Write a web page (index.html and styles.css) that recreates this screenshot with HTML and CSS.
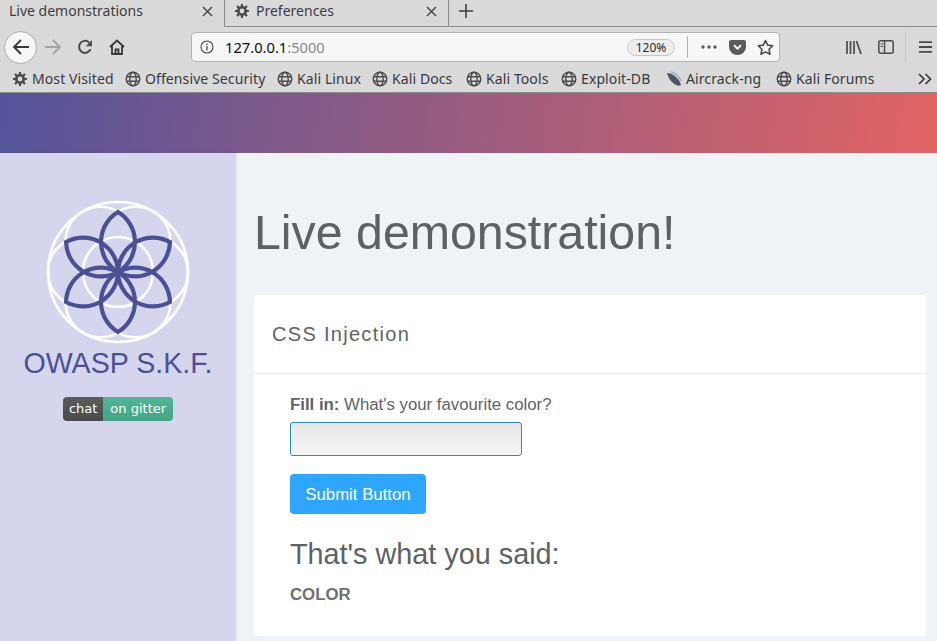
FILE: index.html
```html
<!DOCTYPE html>
<html lang="en">
<head>
  <meta charset="UTF-8">
  <title>Live demonstrations</title>
  <link rel="stylesheet" href="styles.css">
</head>
<body>
  <svg class="defs" width="0" height="0">
    <symbol id="globe" viewBox="0 0 16 16">
      <g fill="none" stroke="#4a4a4f" stroke-width="1.4">
        <circle cx="8" cy="8" r="6.8"/>
        <ellipse cx="8" cy="8" rx="3.2" ry="6.8"/>
        <path d="M1.4 5.7h13.2M1.4 10.3h13.2"/>
      </g>
    </symbol>
    <symbol id="gear" viewBox="0 0 16 16">
      <circle cx="8" cy="8" r="3.9" fill="none" stroke="#4a4a4f" stroke-width="2.4"/>
      <path d="M8 1v14M1 8h14M3 3l10 10M13 3L3 13" stroke="#4a4a4f" stroke-width="2.2"/>
      <circle cx="8" cy="8" r="2.4" fill="#dadada"/>
    </symbol>
    <symbol id="close" viewBox="0 0 11 11">
      <path d="M1 1l9 9M10 1l-9 9" stroke="#4a4a4f" stroke-width="1.5"/>
    </symbol>
  </svg>

  <div class="tabbar">
    <div class="tab tab-active">
      <span class="tab-title">Live demonstrations</span>
      <svg width="11" height="11"><use href="#close"/></svg>
    </div>
    <div class="tab">
      <svg class="tab-icon" width="16" height="16"><use href="#gear"/></svg>
      <span class="tab-title">Preferences</span>
      <svg width="11" height="11"><use href="#close"/></svg>
    </div>
    <div class="tab-new">
      <svg width="16" height="16" viewBox="0 0 16 16"><path d="M8 1v14M1 8h14" stroke="#3c3c3f" stroke-width="1.6"/></svg>
    </div>
  </div>

  <div class="toolbar">
    <div class="back-btn">
      <svg width="18" height="18" viewBox="0 0 18 18"><path d="M17 9H2M9 2L2 9l7 7" fill="none" stroke="#38383d" stroke-width="1.9"/></svg>
    </div>
    <svg class="tool-icon forward" width="18" height="18" viewBox="0 0 18 18"><path d="M1 9h15M9 2l7 7-7 7" fill="none" stroke="#a3a3a3" stroke-width="1.9"/></svg>
    <svg class="tool-icon reload" width="16" height="16" viewBox="0 0 16 16"><path d="M13.6 10.2A6 6 0 1 1 12.3 3.6" fill="none" stroke="#4a4a4f" stroke-width="2"/><path d="M15 1v6.2H8.8z" fill="#4a4a4f"/></svg>
    <svg class="tool-icon home" width="16" height="16" viewBox="0 0 16 16"><path d="M1 8l7-6.5L15 8M3 6.5V15h10V6.5M6.5 15v-4.5h3V15" fill="none" stroke="#38383d" stroke-width="1.8"/></svg>

    <div class="urlbar">
      <svg class="info-icon" width="14" height="14" viewBox="0 0 14 14"><circle cx="7" cy="7" r="6" fill="none" stroke="#4a4a4f" stroke-width="1.1"/><path d="M7 6v4.4M7 3.4v1.5" stroke="#4a4a4f" stroke-width="1.3"/></svg>
      <span class="url">127.0.0.1<span class="url-port">:5000</span></span>
      <span class="zoom-pill">120%</span>
      <span class="url-sep"></span>
      <svg class="url-icon" width="18" height="4" viewBox="0 0 18 4"><circle cx="3" cy="2" r="1.7" fill="#5a5a5f"/><circle cx="9" cy="2" r="1.7" fill="#5a5a5f"/><circle cx="15" cy="2" r="1.7" fill="#5a5a5f"/></svg>
      <svg class="url-icon" width="17" height="15" viewBox="0 0 17 15"><path d="M2 0h13a2 2 0 0 1 2 2v5a8.5 8 0 0 1-17 0V2a2 2 0 0 1 2-2z" fill="#5a5a5f"/><path d="M5 5.2l3.5 3.4L12 5.2" fill="none" stroke="#f7f7f7" stroke-width="2"/></svg>
      <svg class="url-icon" width="17" height="17" viewBox="0 0 17 17"><path d="M8.5 1.5l2.2 4.6 5 .7-3.6 3.5.9 5-4.5-2.4L4 15.3l.9-5L1.3 6.8l5-.7z" fill="none" stroke="#4a4a4f" stroke-width="1.6" stroke-linejoin="round"/></svg>
    </div>

    <div class="tool-right">
      <svg width="16" height="15" viewBox="0 0 16 15"><path d="M1 1v13M4.5 1v13M8 1v13M10.5 1l4.5 13" fill="none" stroke="#4a4a4f" stroke-width="1.7"/></svg>
      <svg class="sidebar-icon" width="16" height="14" viewBox="0 0 16 14"><rect x="0.8" y="0.8" width="14.4" height="12.4" rx="2" fill="none" stroke="#4a4a4f" stroke-width="1.5"/><path d="M6.5 1v12" stroke="#4a4a4f" stroke-width="1.5"/><path d="M2.5 4h2.5M2.5 6.5h2.5" stroke="#4a4a4f" stroke-width="1"/></svg>
      <span class="tool-sep"></span>
      <svg width="13" height="12" viewBox="0 0 13 12"><path d="M0 1.2h13M0 6h13M0 10.8h13" stroke="#4a4a4f" stroke-width="1.8"/></svg>
    </div>
  </div>

  <div class="bookmarks">
    <span class="bookmark"><svg width="16" height="16"><use href="#gear"/></svg>Most Visited</span>
    <span class="bookmark"><svg width="16" height="16"><use href="#globe"/></svg>Offensive Security</span>
    <span class="bookmark"><svg width="16" height="16"><use href="#globe"/></svg>Kali Linux</span>
    <span class="bookmark"><svg width="16" height="16"><use href="#globe"/></svg>Kali Docs</span>
    <span class="bookmark"><svg width="16" height="16"><use href="#globe"/></svg>Kali Tools</span>
    <span class="bookmark"><svg width="16" height="16"><use href="#globe"/></svg>Exploit-DB</span>
    <span class="bookmark"><svg width="16" height="16" viewBox="0 0 16 16"><path d="M1 2c6 0 12 5 14 12-1 1-3 1-5 0C6 12 2 7 1 2z" fill="#4f5660"/><path d="M5 1c4 1 8 4 10 9" fill="none" stroke="#8fb0dc" stroke-width="1.5"/></svg>Aircrack-ng</span>
    <span class="bookmark"><svg width="16" height="16"><use href="#globe"/></svg>Kali Forums</span>
    <svg class="more" width="14" height="12" viewBox="0 0 14 12"><path d="M1 1l5 5-5 5M7.5 1l5 5-5 5" fill="none" stroke="#38383d" stroke-width="1.7"/></svg>
  </div>

  <div class="banner"></div>

  <div class="layout">
    <aside class="sidebar">
      <svg class="logo" width="150" height="150" viewBox="-75 -75 150 150">
        <g fill="none" stroke="#fff" stroke-width="2.6">
          <circle r="70"/>
          <circle r="35"/>
          <circle cx="35" cy="0" r="35"/>
          <circle cx="17.5" cy="-30.3" r="35"/>
          <circle cx="-17.5" cy="-30.3" r="35"/>
          <circle cx="-35" cy="0" r="35"/>
          <circle cx="-17.5" cy="30.3" r="35"/>
          <circle cx="17.5" cy="30.3" r="35"/>
        </g>
        <g fill="none" stroke="#4b5094" stroke-width="4.2">
          <path d="M0 0A35 35 0 0 1 0-60A35 35 0 0 1 0 0z"/>
          <path d="M0 0A35 35 0 0 1 0-60A35 35 0 0 1 0 0z" transform="rotate(60)"/>
          <path d="M0 0A35 35 0 0 1 0-60A35 35 0 0 1 0 0z" transform="rotate(120)"/>
          <path d="M0 0A35 35 0 0 1 0-60A35 35 0 0 1 0 0z" transform="rotate(180)"/>
          <path d="M0 0A35 35 0 0 1 0-60A35 35 0 0 1 0 0z" transform="rotate(240)"/>
          <path d="M0 0A35 35 0 0 1 0-60A35 35 0 0 1 0 0z" transform="rotate(300)"/>
        </g>
      </svg>
      <div class="brand">OWASP S.K.F.</div>
      <div class="badge"><span class="badge-left">chat</span><span class="badge-right">on gitter</span></div>
    </aside>

    <main class="content">
      <h1 class="title">Live demonstration!</h1>
      <section class="card">
        <header class="card-head">CSS Injection</header>
        <div class="card-body">
          <label class="field-label" for="color"><b>Fill in:</b> What's your favourite color?</label>
          <input class="field" id="color" type="text">
          <button class="submit" type="button">Submit Button</button>
          <h2 class="said">That's what you said:</h2>
          <p class="answer">COLOR</p>
        </div>
      </section>
    </main>
  </div>
</body>
</html>
```

FILE: styles.css
```css
html, body {
  height: 100%;
}

body {
  margin: 0;
  display: flex;
  flex-direction: column;
  overflow: hidden;
  font-family: "Liberation Sans", Arial, sans-serif;
  background-color: #eff3f6;
}

.defs {
  position: absolute;
}

/* browser chrome */
.tabbar {
  height: 27px;
  flex: none;
  display: flex;
  box-sizing: border-box;
  border-bottom: 1px solid #8c8c8c;
  background-color: #dadada;
  font-family: "Noto Sans", sans-serif;
  font-size: 14px;
  color: #3c3c3f;
}

.tab {
  width: 224px;
  display: flex;
  align-items: center;
  box-sizing: border-box;
  padding: 0 11px 4px 9px;
  border-right: 1px solid #8c8c8c;
}

/* sits over the strip's bottom line */
.tab-active {
  width: 225px;
  margin-bottom: -1px;
  padding-bottom: 5px;
  background-color: #dadada;
}

.tab-icon {
  margin-right: 6px;
}

.tab-title {
  flex: 1;
  margin-top: -1px;
}

.tab-new {
  width: 34px;
  display: flex;
  align-items: center;
  justify-content: center;
  padding-bottom: 4px;
}

.toolbar {
  height: 38px;
  padding-top: 1px;
  flex: none;
  display: flex;
  align-items: center;
  background-color: #dadada;
}

.back-btn {
  width: 33px;
  height: 33px;
  margin-left: 4px;
  display: flex;
  align-items: center;
  justify-content: center;
  box-sizing: border-box;
  border: 1px solid #ababab;
  border-radius: 50%;
  background-color: #f7f7f7;
}

.tool-icon {
  flex: none;
}

.forward {
  margin-left: 7px;
}

.reload {
  margin-left: 15px;
}

.home {
  margin-left: 16px;
}

.urlbar {
  width: 589px;
  height: 30px;
  margin-left: 66px;
  display: flex;
  align-items: center;
  box-sizing: border-box;
  padding: 0 5px 0 8px;
  border: 1px solid #b4b4b4;
  border-radius: 4px;
  background-color: #f7f7f7;
  font-family: "Noto Sans", sans-serif;
}

.url {
  flex: 1;
  margin-left: 11px;
  font-size: 14.7px;
  color: #0c0c0d;
}

.url-port {
  color: #8a8a8a;
}

.zoom-pill {
  width: 46px;
  height: 15px;
  line-height: 15px;
  text-align: center;
  border: 1px solid #c8c8c8;
  border-radius: 9px;
  background-color: #ededed;
  font-size: 12px;
  color: #2a2a2e;
}

.url-sep {
  width: 1px;
  height: 22px;
  margin: 0 12px;
  background-color: #b4b4b4;
}

.url-icon {
  margin-right: 11px;
}

.url-icon:last-child {
  margin-right: 0;
}

.tool-right {
  display: flex;
  align-items: center;
  margin-left: 66px;
}

.sidebar-icon {
  margin-left: 16px;
}

.tool-sep {
  width: 1px;
  height: 32px;
  margin: 0 13px 0 11px;
  background-color: #c4c4c4;
}

.bookmarks {
  height: 27px;
  flex: none;
  display: grid;
  grid-template-columns: 113px 152px 95px 94px 95px 105px 110px 1fr auto;
  align-items: center;
  box-sizing: border-box;
  padding: 0 0 1px 12px;
  border-bottom: 1px solid #8c8c8c;
  background-color: #dadada;
  font-family: "Noto Sans", sans-serif;
  font-size: 14px;
  letter-spacing: 0.1px;
  color: #38383d;
  white-space: nowrap;
}

.bookmark {
  display: flex;
  align-items: center;
  gap: 4px;
}

.more {
  margin-right: 5px;
}

.banner {
  height: 60px;
  flex: none;
  background: linear-gradient(100deg, #54549b 0%, #e26464 100%);
}

/* page */
.layout {
  flex: 1;
  display: flex;
  min-height: 0;
}

.sidebar {
  width: 236px;
  flex: none;
  display: flex;
  flex-direction: column;
  align-items: center;
  padding-top: 44px;
  background-color: #d5d6ee;
  box-shadow: 1px 0 4px rgba(0, 0, 0, 0.06);
}

.logo {
  display: block;
}

.brand {
  margin-top: -1px;
  font-size: 28.6px;
  line-height: 34px;
  color: #4b5094;
}

.badge {
  display: flex;
  margin-top: 17px;
  height: 24px;
  line-height: 24px;
  border-radius: 4px;
  overflow: hidden;
  font-family: "DejaVu Sans", sans-serif;
  font-size: 13px;
  color: #fff;
}

.badge-left {
  padding: 0 6px;
  background: linear-gradient(#5c5c5c, #4a4a4a);
}

.badge-right {
  padding: 0 7px;
  background: linear-gradient(#4fb596, #45a585);
}

.content {
  flex: 1;
  min-width: 0;
  padding: 0 11px 0 18px;
}

.title {
  margin: 49px 0 33px 0;
  font-size: 48.3px;
  font-weight: 400;
  line-height: 60px;
  color: #5c6166;
}

.card {
  height: 341px;
  border-radius: 4px;
  background-color: #fff;
}

.card-head {
  height: 79px;
  line-height: 78px;
  box-sizing: border-box;
  padding-left: 18px;
  border-bottom: 1px solid #e9ecef;
  font-size: 20px;
  letter-spacing: 1.3px;
  color: #5f6368;
}

.card-body {
  display: flex;
  flex-direction: column;
  align-items: flex-start;
  padding: 20px 36px;
  color: #5f6368;
}

.field-label {
  font-size: 16.8px;
  line-height: 22px;
}

.field {
  width: 232px;
  height: 34px;
  margin-top: 6px;
  box-sizing: border-box;
  border: 1px solid #2a8bc5;
  border-radius: 3px;
  background: linear-gradient(#e7e7e7, #f5f5f5);
}

.submit {
  width: 136px;
  height: 40px;
  margin-top: 18px;
  padding: 2px 0 0;
  border: 0;
  border-radius: 4px;
  background-color: #2ea5ff;
  color: #fff;
  font-family: inherit;
  font-size: 16.8px;
}

.said {
  margin: 23px 0 0;
  font-size: 28.8px;
  font-weight: 400;
  line-height: 34px;
  color: #5c6166;
}

.answer {
  margin: 13px 0 0;
  font-size: 16.8px;
  font-weight: 700;
  line-height: 22px;
  color: #6f6f6f;
}
```
